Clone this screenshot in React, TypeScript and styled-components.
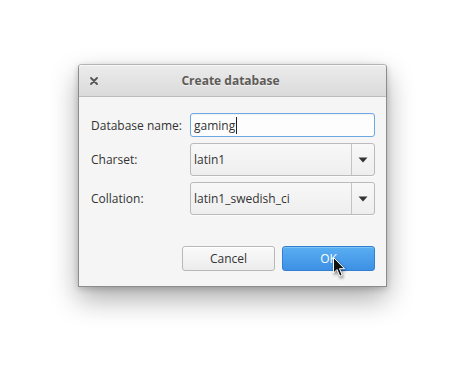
import styled, { createGlobalStyle } from "styled-components";

const GlobalStyle = createGlobalStyle`
    html, body {
        margin: 0;
        padding: 0;
        background: #ffffff;
    }
    * {
        box-sizing: border-box;
    }
`;

const PageEl = styled.div`
    width: 465px;
    height: 379px;
    padding: 64px 0 0 78px;
    font-family: "Open Sans", "DejaVu Sans", sans-serif;
    font-size: 12px;
    color: #333333;
`;

const DialogEl = styled.div`
    width: 309px;
    height: 223px;
    display: flex;
    flex-direction: column;
    background: #f5f5f5;
    border: 1px solid #8c8c8c;
    border-top-color: #b4b4b4;
    border-radius: 4px 4px 0 0;
    box-shadow: 0 12px 28px rgba(0, 0, 0, 0.33), 0 2px 6px rgba(0, 0, 0, 0.18);
`;

const TitleBarEl = styled.div`
    height: 32px;
    flex-shrink: 0;
    display: grid;
    grid-template-columns: 30px 1fr 34px;
    align-items: center;
    background: linear-gradient(#ececec, #dadada);
    border-bottom: 1px solid #bcbcbc;
    border-radius: 3px 3px 0 0;
    box-shadow: inset 0 1px 0 #f8f8f8;
`;

const CloseEl = styled.div`
    display: flex;
    justify-content: center;
    color: #555555;
`;

const TitleEl = styled.h1`
    margin: 0 0 1px;
    text-align: center;
    font-size: 12px;
    font-weight: 700;
    color: #5e5b58;
    text-shadow: 0 1px 0 rgba(255, 255, 255, 0.6);
`;

const BodyEl = styled.div`
    flex: 1;
    display: flex;
    flex-direction: column;
    padding: 16px 11px 14px 12px;
`;

const FormEl = styled.div`
    display: grid;
    grid-template-columns: 99px 1fr;
    grid-template-rows: 24px 33px 33px;
    row-gap: 6px;
    align-items: center;
`;

const LabelEl = styled.label`
    white-space: nowrap;
`;

const TextFieldEl = styled.div`
    height: 24px;
    display: flex;
    align-items: center;
    padding: 0 3px;
    background: #fdfdfd;
    border: 1px solid #6aa9e6;
    border-radius: 3px;
    box-shadow: inset 0 1px 1px rgba(0, 0, 0, 0.05);
`;

const CaretEl = styled.span`
    display: inline-block;
    width: 1px;
    height: 17px;
    margin-left: 1px;
    background: #222222;
`;

const ComboEl = styled.div`
    height: 100%;
    display: flex;
    background: linear-gradient(#f8f8f8, #eeeeee);
    border: 1px solid #bababa;
    border-radius: 3px;
    box-shadow: 0 1px 0 rgba(255, 255, 255, 0.7);
`;

const ComboValueEl = styled.div`
    flex: 1;
    display: flex;
    align-items: center;
    padding-left: 3px;
`;

const ComboArrowEl = styled.div`
    width: 23px;
    display: flex;
    align-items: center;
    justify-content: center;
    border-left: 1px solid #c4c4c4;
`;

const ButtonRowEl = styled.div`
    margin-top: auto;
    margin-bottom: 1px;
    display: flex;
    justify-content: flex-end;
    gap: 7px;
`;

const ButtonEl = styled.button<{ $primary?: boolean }>`
    position: relative;
    width: 93px;
    height: 25px;
    padding: 0;
    font-family: inherit;
    font-size: 12px;
    border-radius: 3px;
    color: ${(p) => (p.$primary ? "#ffffff" : "#333333")};
    border: 1px solid ${(p) => (p.$primary ? "#2f7fd2" : "#b8b8b8")};
    background: ${(p) =>
        p.$primary
            ? "linear-gradient(#5aaef2, #3d90e4)"
            : "linear-gradient(#fafafa, #ececec)"};
    box-shadow: inset 0 1px 0
        ${(p) => (p.$primary ? "rgba(255,255,255,0.25)" : "#ffffff")};
`;

const PointerEl = styled.svg`
    position: absolute;
    left: 50px;
    top: 10px;
    filter: drop-shadow(1px 2px 1.5px rgba(0, 0, 0, 0.45));
`;

function Arrow() {
    return (
        <svg width="10" height="6" viewBox="0 0 10 6">
            <path d="M0.5 0.5 L9.5 0.5 L5 5.5 Z" fill="#333333" />
        </svg>
    );
}

function Combo({ value }: { value: string }) {
    return (
        <ComboEl>
            <ComboValueEl>{value}</ComboValueEl>
            <ComboArrowEl>
                <Arrow />
            </ComboArrowEl>
        </ComboEl>
    );
}

export default function App() {
    return (
        <PageEl>
            <GlobalStyle />
            <DialogEl>
                <TitleBarEl>
                    <CloseEl>
                        <svg width="8" height="8" viewBox="0 0 8 8">
                            <path
                                d="M1 1 L7 7 M7 1 L1 7"
                                stroke="#555555"
                                strokeWidth="1.8"
                                strokeLinecap="round"
                            />
                        </svg>
                    </CloseEl>
                    <TitleEl>Create database</TitleEl>
                    <span />
                </TitleBarEl>
                <BodyEl>
                    <FormEl>
                        <LabelEl>Database name:</LabelEl>
                        <TextFieldEl>
                            gaming
                            <CaretEl />
                        </TextFieldEl>
                        <LabelEl>Charset:</LabelEl>
                        <Combo value="latin1" />
                        <LabelEl>Collation:</LabelEl>
                        <Combo value="latin1_swedish_ci" />
                    </FormEl>
                    <ButtonRowEl>
                        <ButtonEl>Cancel</ButtonEl>
                        <ButtonEl $primary>
                            OK
                            <PointerEl width="13" height="21" viewBox="0 0 13 21">
                                <path
                                    d="M0.5 0.5 L0.5 16 L4 12.5 L6.8 19.2 L9.2 18.2 L6.5 11.7 L11.5 11.7 Z"
                                    fill="#111111"
                                    stroke="#ffffff"
                                    strokeWidth="1"
                                    strokeLinejoin="round"
                                />
                            </PointerEl>
                        </ButtonEl>
                    </ButtonRowEl>
                </BodyEl>
            </DialogEl>
        </PageEl>
    );
}
